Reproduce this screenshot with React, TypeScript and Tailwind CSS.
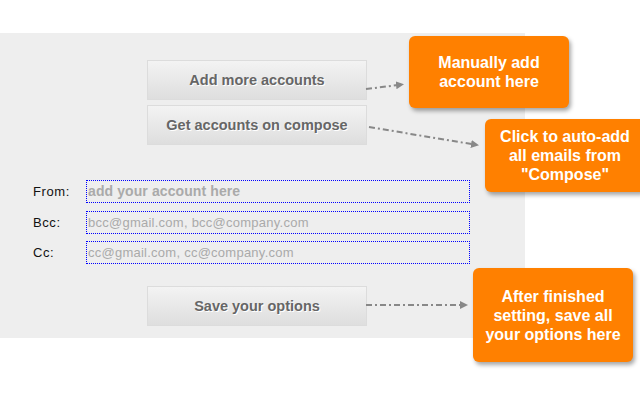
import React from "react";

const btn =
  "w-[220px] h-[40px] pt-[2px] border border-[#dcdcdc] bg-gradient-to-b from-[#f3f3f3] to-[#dedede] text-[14.5px] font-bold text-[#666] [text-shadow:1px_1px_0_#fff] flex items-center justify-center";

const callout =
  "absolute w-[160px] rounded-[6px] bg-[#ff8000] text-white font-bold text-[16px] leading-[19px] text-center flex items-center justify-center shadow-[2px_3px_4px_rgba(0,0,0,0.35)]";

function Field({ label, placeholder, bold }: { label: string; placeholder: string; bold?: boolean }) {
  return (
    <div className="flex items-center h-[23px]">
      <span className="w-[53px] pl-[33px] box-content text-[13px] tracking-[0.6px] text-[#111] shrink-0">{label}</span>
      <div
        className={`w-[384px] h-[23px] border border-dotted border-[#0000ff] flex items-center pl-[1px] ${
          bold ? "text-[14px] font-bold tracking-[0.1px]" : "text-[13px] tracking-[0.25px]"
        } text-[#aaa]`}
      >
        {placeholder}
      </div>
    </div>
  );
}

export default function App() {
  return (
    <div className="relative w-[640px] h-[400px] bg-white overflow-hidden" style={{ fontFamily: '"Liberation Sans", Arial, sans-serif' }}>
      <div className="mt-[33px] w-[525px] h-[305px] bg-[#eeeeee] pt-[27px]">
        <div className="flex flex-col gap-[5px] pl-[147px]">
          <button className={btn}>Add more accounts</button>
          <button className={btn}>Get accounts on compose</button>
        </div>
        <div className="mt-[35px] flex flex-col">
          <Field label="From:" placeholder="add your account here" bold />
          <div className="h-[8px]" />
          <Field label="Bcc:" placeholder="bcc@gmail.com, bcc@company.com" />
          <div className="h-[7px]" />
          <Field label="Cc:" placeholder="cc@gmail.com, cc@company.com" />
        </div>
        <div className="mt-[22px] pl-[147px]">
          <button className={btn}>Save your options</button>
        </div>
      </div>

      <svg className="absolute left-0 top-0" width="640" height="400">
        <defs>
          <marker id="ah" markerWidth="8" markerHeight="8" refX="6" refY="4" orient="auto" markerUnits="userSpaceOnUse">
            <path d="M0,0 L8,4 L0,8 Z" fill="#888" />
          </marker>
        </defs>
        <g stroke="#888" strokeWidth="2" strokeDasharray="6 3 2 3" fill="none">
          <line x1="366" y1="89" x2="402" y2="84.5" markerEnd="url(#ah)" />
          <line x1="369" y1="127" x2="477" y2="145" markerEnd="url(#ah)" />
          <line x1="366" y1="305" x2="466" y2="305" markerEnd="url(#ah)" />
        </g>
      </svg>

      <div className={`${callout} left-[409px] top-[36px] h-[72px]`}>
        Manually add
        <br />
        account here
      </div>
      <div className={`${callout} left-[485px] top-[119px] h-[73px]`}>
        Click to auto-add
        <br />
        all emails from
        <br />
        "Compose"
      </div>
      <div className={`${callout} left-[473px] top-[268px] h-[94px]`}>
        After finished
        <br />
        setting, save all
        <br />
        your options here
      </div>
    </div>
  );
}
